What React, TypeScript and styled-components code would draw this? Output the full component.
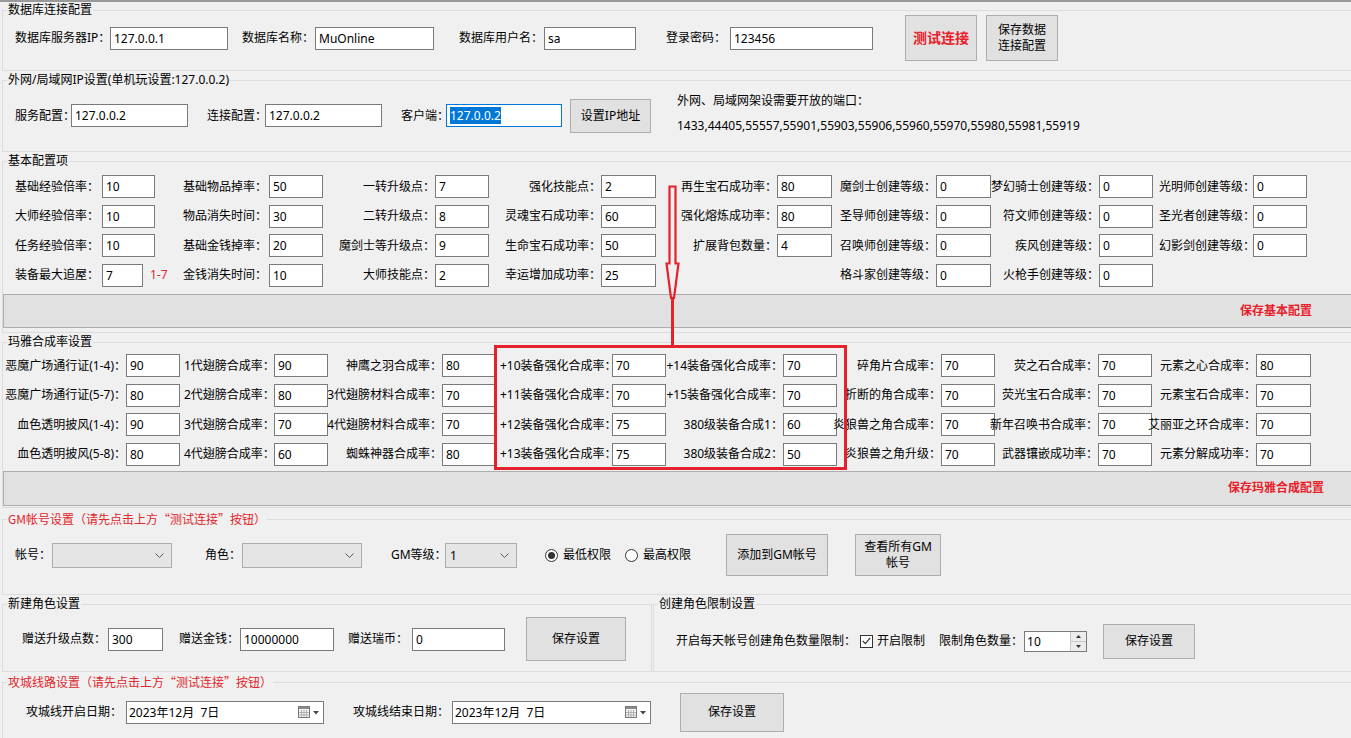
import React from 'react';
import styled, { createGlobalStyle } from 'styled-components';

const GlobalStyle = createGlobalStyle`
  html, body {
    margin: 0;
    padding: 0;
    background: #f0f0f0;
  }
  body {
    font-family: "Noto Sans", "Noto Sans CJK SC", sans-serif;
    font-size: 12px;
    color: #000;
  }
`;

const Page = styled.div`
  position: relative;
  width: 1351px;
  height: 738px;
  overflow: hidden;
  background: #f0f0f0;
`;

const TopRule = styled.div`
  height: 2px;
  background: #9a9a9a;
`;

const Group = styled.fieldset<{ $h: number; $mt?: number; $w?: number; $ml?: number }>`
  box-sizing: border-box;
  margin: ${p => p.$mt ?? 1}px 0 0 ${p => p.$ml ?? 2}px;
  padding: 0;
  width: ${p => p.$w ?? 1380}px;
  height: ${p => p.$h}px;
  border: 1px solid #dcdcdc;
  min-width: 0;
  flex: none;
`;

const Title = styled.legend<{ $red?: boolean }>`
  margin-left: 4px;
  padding: 0 1px;
  font-size: 12px;
  line-height: 16px;
  color: ${p => (p.$red ? '#e0272c' : '#000')};
  font-family: ${p => (p.$red ? '"Noto Sans CJK SC", sans-serif' : 'inherit')};
`;

const Row = styled.div<{ $h: number }>`
  display: flex;
  align-items: center;
  height: ${p => p.$h}px;
`;

const SplitRow = styled.div`
  display: flex;
  margin-top: 1px;
`;

const Field = styled.div<{ $ml?: number }>`
  display: flex;
  align-items: center;
  flex: none;
  margin-left: ${p => p.$ml ?? 0}px;
`;

const Label = styled.span<{ $w?: number; $right?: boolean }>`
  display: flex;
  justify-content: ${p => (p.$right ? 'flex-end' : 'flex-start')};
  width: ${p => (p.$w ? `${p.$w}px` : 'auto')};
  flex: none;
  white-space: nowrap;
  line-height: 16px;
`;

const TextBox = styled.div<{ $w: number; $focus?: boolean }>`
  box-sizing: border-box;
  width: ${p => p.$w}px;
  height: 23px;
  flex: none;
  border: 1px solid ${p => (p.$focus ? '#0078d7' : '#7a7a7a')};
  background: #fff;
  padding: 0 3px;
  line-height: 21px;
  white-space: nowrap;
  overflow: hidden;
`;

const Selected = styled.span`
  display: inline-block;
  background: #0078d7;
  color: #fff;
  line-height: 17px;
`;

const Note = styled.span`
  flex: none;
  margin-left: 7px;
  color: #e0272c;
  line-height: 16px;
  white-space: nowrap;
`;

const Button = styled.div<{ $w: number; $h: number; $ml: number; $red?: boolean }>`
  box-sizing: border-box;
  width: ${p => p.$w}px;
  height: ${p => p.$h}px;
  margin-left: ${p => p.$ml}px;
  flex: none;
  border: 1px solid #adadad;
  background: #e1e1e1;
  display: flex;
  align-items: center;
  justify-content: center;
  text-align: center;
  line-height: 16px;
  color: ${p => (p.$red ? '#e8202a' : '#000')};
  font-weight: ${p => (p.$red ? 700 : 400)};
  font-size: ${p => (p.$red ? 14 : 12)}px;
`;

const Info = styled.div<{ $ml: number }>`
  align-self: flex-start;
  margin-left: ${p => p.$ml}px;
  line-height: 25px;
  white-space: nowrap;
`;

const Columns = styled.div<{ $pt: number }>`
  display: flex;
  padding-top: ${p => p.$pt}px;
`;

const Column = styled.div<{ $ml: number; $w: number }>`
  display: grid;
  grid-template-rows: repeat(4, 23px);
  row-gap: 6.67px;
  width: ${p => p.$w}px;
  margin-left: ${p => p.$ml}px;
  flex: none;
`;

const SaveBar = styled.div<{ $h: number; $mt: number }>`
  box-sizing: border-box;
  height: ${p => p.$h}px;
  margin-top: ${p => p.$mt}px;
  border: 1px solid #adadad;
  background: #e1e1e1;
  display: flex;
  align-items: center;
  justify-content: flex-end;
  padding-right: 34px;
`;

const SaveText = styled.span`
  width: 140px;
  text-align: center;
  color: #e8202a;
  font-weight: 700;
  line-height: 16px;
`;

const Combo = styled.div<{ $w: number }>`
  box-sizing: border-box;
  width: ${p => p.$w}px;
  height: 25px;
  flex: none;
  border: 1px solid #adadad;
  background: #e5e5e5;
  display: flex;
  align-items: center;
  justify-content: space-between;
  padding: 0 7px 0 4px;
`;

const RadioItem = styled.div<{ $ml: number }>`
  display: flex;
  align-items: center;
  gap: 5px;
  margin-left: ${p => p.$ml}px;
  flex: none;
`;

const RadioDot = styled.span<{ $on?: boolean }>`
  box-sizing: border-box;
  width: 13px;
  height: 13px;
  border-radius: 50%;
  border: 1px solid #333;
  background: #fff;
  display: flex;
  align-items: center;
  justify-content: center;
  &::after {
    content: '';
    display: ${p => (p.$on ? 'block' : 'none')};
    width: 7px;
    height: 7px;
    border-radius: 50%;
    background: #333;
  }
`;

const CheckBox = styled.span`
  box-sizing: border-box;
  width: 13px;
  height: 13px;
  border: 1px solid #333;
  background: #fff;
  display: flex;
  align-items: center;
  justify-content: center;
  margin-left: 4px;
  margin-right: 4px;
`;

const Numeric = styled.div<{ $w: number }>`
  box-sizing: border-box;
  width: ${p => p.$w}px;
  height: 21px;
  flex: none;
  border: 1px solid #7a7a7a;
  background: #fff;
  display: flex;
  align-items: stretch;
  padding-left: 2px;
  line-height: 19px;
`;

const Spinner = styled.div`
  display: flex;
  flex-direction: column;
  width: 15px;
  margin-left: auto;
  border-left: 1px solid #c8c8c8;
`;

const SpinBtn = styled.div`
  flex: 1;
  background: #ececec;
  display: flex;
  align-items: center;
  justify-content: center;
  & + & {
    border-top: 1px solid #c8c8c8;
  }
`;

const DateBox = styled.div<{ $w: number }>`
  box-sizing: border-box;
  width: ${p => p.$w}px;
  height: 23px;
  flex: none;
  border: 1px solid #7a7a7a;
  background: #fff;
  display: flex;
  align-items: center;
  justify-content: space-between;
  padding: 0 3px 0 2px;
  white-space: pre;
`;

const Annotation = styled.svg`
  position: absolute;
  left: 0;
  top: 0;
  pointer-events: none;
`;

type Cell = { label: string; value: string; iw?: number; note?: string };
type ColSpec = { ml: number; lw: number; iw: number; right?: boolean; cells: Cell[] };

const basicCols: ColSpec[] = [
  {
    ml: 12, lw: 87, iw: 53,
    cells: [
      { label: '基础经验倍率：', value: '10' },
      { label: '大师经验倍率：', value: '10' },
      { label: '任务经验倍率：', value: '10' },
      { label: '装备最大追屋：', value: '7', iw: 41, note: '1-7' },
    ],
  },
  {
    ml: 28, lw: 86, iw: 54,
    cells: [
      { label: '基础物品掉率：', value: '50' },
      { label: '物品消失时间：', value: '30' },
      { label: '基础金钱掉率：', value: '20' },
      { label: '金钱消失时间：', value: '10' },
    ],
  },
  {
    ml: 7, lw: 105, iw: 54, right: true,
    cells: [
      { label: '一转升级点：', value: '7' },
      { label: '二转升级点：', value: '8' },
      { label: '魔剑士等升级点：', value: '9' },
      { label: '大师技能点：', value: '2' },
    ],
  },
  {
    ml: 6, lw: 106, iw: 55, right: true,
    cells: [
      { label: '强化技能点：', value: '2' },
      { label: '灵魂宝石成功率：', value: '60' },
      { label: '生命宝石成功率：', value: '50' },
      { label: '幸运增加成功率：', value: '25' },
    ],
  },
  {
    ml: 14, lw: 107, iw: 55, right: true,
    cells: [
      { label: '再生宝石成功率：', value: '80' },
      { label: '强化熔炼成功率：', value: '80' },
      { label: '扩展背包数量：', value: '4' },
    ],
  },
  {
    ml: 4, lw: 100, iw: 55, right: true,
    cells: [
      { label: '魔剑士创建等级：', value: '0' },
      { label: '圣导师创建等级：', value: '0' },
      { label: '召唤师创建等级：', value: '0' },
      { label: '格斗家创建等级：', value: '0' },
    ],
  },
  {
    ml: 0, lw: 108, iw: 54, right: true,
    cells: [
      { label: '梦幻骑士创建等级：', value: '0' },
      { label: '符文师创建等级：', value: '0' },
      { label: '疾风创建等级：', value: '0' },
      { label: '火枪手创建等级：', value: '0' },
    ],
  },
  {
    ml: 6, lw: 94, iw: 54,
    cells: [
      { label: '光明师创建等级：', value: '0' },
      { label: '圣光者创建等级：', value: '0' },
      { label: '幻影剑创建等级：', value: '0' },
    ],
  },
];

const mayaCols: ColSpec[] = [
  {
    ml: 0, lw: 123, iw: 54, right: true,
    cells: [
      { label: '恶魔广场通行证(1-4)：', value: '90' },
      { label: '恶魔广场通行证(5-7)：', value: '80' },
      { label: '血色透明披风(1-4)：', value: '90' },
      { label: '血色透明披风(5-8)：', value: '80' },
    ],
  },
  {
    ml: 4, lw: 90, iw: 54,
    cells: [
      { label: '1代翅膀合成率：', value: '90' },
      { label: '2代翅膀合成率：', value: '80' },
      { label: '3代翅膀合成率：', value: '70' },
      { label: '4代翅膀合成率：', value: '60' },
    ],
  },
  {
    ml: 2, lw: 112, iw: 54, right: true,
    cells: [
      { label: '神鹰之羽合成率：', value: '80' },
      { label: '3代翅膀材料合成率：', value: '70' },
      { label: '4代翅膀材料合成率：', value: '70' },
      { label: '蜘蛛神器合成率：', value: '80' },
    ],
  },
  {
    ml: 4, lw: 112, iw: 54,
    cells: [
      { label: '+10装备强化合成率：', value: '70' },
      { label: '+11装备强化合成率：', value: '70' },
      { label: '+12装备强化合成率：', value: '75' },
      { label: '+13装备强化合成率：', value: '75' },
    ],
  },
  {
    ml: 1, lw: 116, iw: 54, right: true,
    cells: [
      { label: '+14装备强化合成率：', value: '70' },
      { label: '+15装备强化合成率：', value: '70' },
      { label: '380级装备合成1：', value: '60' },
      { label: '380级装备合成2：', value: '50' },
    ],
  },
  {
    ml: 1, lw: 103, iw: 54, right: true,
    cells: [
      { label: '碎角片合成率：', value: '70' },
      { label: '折断的角合成率：', value: '70' },
      { label: '炎狼兽之角合成率：', value: '70' },
      { label: '炎狼兽之角升级：', value: '70' },
    ],
  },
  {
    ml: 1, lw: 102, iw: 54, right: true,
    cells: [
      { label: '荧之石合成率：', value: '70' },
      { label: '荧光宝石合成率：', value: '70' },
      { label: '新年召唤书合成率：', value: '70' },
      { label: '武器镶嵌成功率：', value: '70' },
    ],
  },
  {
    ml: 1, lw: 103, iw: 55, right: true,
    cells: [
      { label: '元素之心合成率：', value: '80' },
      { label: '元素宝石合成率：', value: '70' },
      { label: '艾丽亚之环合成率：', value: '70' },
      { label: '元素分解成功率：', value: '70' },
    ],
  },
];

const GridColumns: React.FC<{ cols: ColSpec[]; pt: number }> = ({ cols, pt }) => (
  <Columns $pt={pt}>
    {cols.map((c, i) => (
      <Column key={i} $ml={c.ml} $w={c.lw + c.iw}>
        {c.cells.map((cell, j) => (
          <Field key={j}>
            <Label $w={c.lw} $right={c.right}>{cell.label}</Label>
            <TextBox $w={cell.iw ?? c.iw}>{cell.value}</TextBox>
            {cell.note && <Note>{cell.note}</Note>}
          </Field>
        ))}
      </Column>
    ))}
  </Columns>
);

const Chevron = () => (
  <svg width="9" height="5" viewBox="0 0 9 5">
    <path d="M0.5 0.5 L4.5 4.5 L8.5 0.5" fill="none" stroke="#5a5a5a" strokeWidth="1" />
  </svg>
);

const CalendarIcon = () => (
  <svg width="22" height="14" viewBox="0 0 22 14">
    <rect x="0.5" y="1.5" width="11" height="11" fill="#f4f4f4" stroke="#7a7a7a" />
    <rect x="1" y="2" width="10" height="2" fill="#8a8a8a" />
    <path d="M3.5 5v7M6 5v7M8.5 5v7M1 7.5h10M1 10h10" stroke="#b0b0b0" strokeWidth="1" />
    <path d="M15 6h6l-3 3.5z" fill="#4a4a4a" />
  </svg>
);

const App: React.FC = () => {
  return (
    <Page>
      <GlobalStyle />
      <TopRule />

      <Group $h={69} $mt={0}>
        <Title>数据库连接配置</Title>
        <Row $h={40}>
          <Field $ml={12}>
            <Label $w={95}>数据库服务器IP：</Label>
            <TextBox $w={118}>127.0.0.1</TextBox>
          </Field>
          <Field $ml={14}>
            <Label $w={73}>数据库名称：</Label>
            <TextBox $w={119}>MuOnline</TextBox>
          </Field>
          <Field $ml={25}>
            <Label $w={85}>数据库用户名：</Label>
            <TextBox $w={92}>sa</TextBox>
          </Field>
          <Field $ml={30}>
            <Label $w={64}>登录密码：</Label>
            <TextBox $w={143}>123456</TextBox>
          </Field>
          <Button $w={72} $h={46} $ml={32} $red>测试连接</Button>
          <Button $w={72} $h={46} $ml={9}>保存数据<br />连接配置</Button>
        </Row>
      </Group>

      <Group $h={80}>
        <Title>外网/局域网IP设置(单机玩设置:127.0.0.2)</Title>
        <Row $h={55}>
          <Field $ml={12}>
            <Label $w={56}>服务配置：</Label>
            <TextBox $w={117}>127.0.0.2</TextBox>
          </Field>
          <Field $ml={19}>
            <Label $w={58}>连接配置：</Label>
            <TextBox $w={117}>127.0.0.2</TextBox>
          </Field>
          <Field $ml={19}>
            <Label $w={45}>客户端：</Label>
            <TextBox $w={116} $focus><Selected>127.0.0.2</Selected></TextBox>
          </Field>
          <Button $w={81} $h={34} $ml={8}>设置IP地址</Button>
          <Info $ml={26}>
            外网、局域网架设需要开放的端口：
            <br />
            1433,44405,55557,55901,55903,55906,55960,55970,55980,55981,55919
          </Info>
        </Row>
      </Group>

      <Group $h={180}>
        <Title>基本配置项</Title>
        <GridColumns cols={basicCols} pt={6} />
        <SaveBar $h={34} $mt={7}>
          <SaveText>保存基本配置</SaveText>
        </SaveBar>
      </Group>

      <Group $h={174}>
        <Title>玛雅合成率设置</Title>
        <GridColumns cols={mayaCols} pt={4} />
        <SaveBar $h={35} $mt={5}>
          <SaveText>保存玛雅合成配置</SaveText>
        </SaveBar>
      </Group>

      <Group $h={84} $mt={3}>
        <Title $red>GM帐号设置（请先点击上方“测试连接”按钮）</Title>
        <Row $h={56}>
          <Field $ml={12}>
            <Label $w={37}>帐号：</Label>
            <Combo $w={120}><span /><Chevron /></Combo>
          </Field>
          <Field $ml={33}>
            <Label $w={37}>角色：</Label>
            <Combo $w={120}><span /><Chevron /></Combo>
          </Field>
          <Field $ml={29}>
            <Label $w={54}>GM等级：</Label>
            <Combo $w={72}><span>1</span><Chevron /></Combo>
          </Field>
          <RadioItem $ml={28}>
            <RadioDot $on />
            <Label>最低权限</Label>
          </RadioItem>
          <RadioItem $ml={14}>
            <RadioDot />
            <Label>最高权限</Label>
          </RadioItem>
          <Button $w={102} $h={42} $ml={35}>添加到GM帐号</Button>
          <Button $w={86} $h={42} $ml={27}>查看所有GM<br />帐号</Button>
        </Row>
      </Group>

      <SplitRow>
        <Group $h={76} $mt={0} $w={650}>
          <Title>新建角色设置</Title>
          <Row $h={54}>
            <Field $ml={19}>
              <Label $w={86}>赠送升级点数：</Label>
              <TextBox $w={55}>300</TextBox>
            </Field>
            <Field $ml={16}>
              <Label $w={61}>赠送金钱：</Label>
              <TextBox $w={94}>10000000</TextBox>
            </Field>
            <Field $ml={14}>
              <Label $w={64}>赠送瑞币：</Label>
              <TextBox $w={93}>0</TextBox>
            </Field>
            <Button $w={100} $h={44} $ml={21}>保存设置</Button>
          </Row>
        </Group>
        <Group $h={76} $mt={0} $w={720} $ml={1}>
          <Title>创建角色限制设置</Title>
          <Row $h={58}>
            <Field $ml={22}>
              <Label>开启每天帐号创建角色数量限制：</Label>
              <CheckBox>
                <svg width="9" height="8" viewBox="0 0 9 8">
                  <path d="M0.8 4 L3.4 6.6 L8.2 0.8" fill="none" stroke="#333" strokeWidth="1.2" />
                </svg>
              </CheckBox>
              <Label>开启限制</Label>
            </Field>
            <Field $ml={14}>
              <Label $w={85}>限制角色数量：</Label>
              <Numeric $w={63}>
                <span>10</span>
                <Spinner>
                  <SpinBtn>
                    <svg width="5" height="3" viewBox="0 0 5 3"><path d="M0 3h5L2.5 0z" fill="#333" /></svg>
                  </SpinBtn>
                  <SpinBtn>
                    <svg width="5" height="3" viewBox="0 0 5 3"><path d="M0 0h5L2.5 3z" fill="#333" /></svg>
                  </SpinBtn>
                </Spinner>
              </Numeric>
            </Field>
            <Button $w={92} $h={35} $ml={16}>保存设置</Button>
          </Row>
        </Group>
      </SplitRow>

      <Group $h={80} $mt={2}>
        <Title $red>攻城线路设置（请先点击上方“测试连接”按钮）</Title>
        <Row $h={44}>
          <Field $ml={23}>
            <Label $w={100}>攻城线开启日期：</Label>
            <DateBox $w={198}><span>2023年12月  7日</span><CalendarIcon /></DateBox>
          </Field>
          <Field $ml={29}>
            <Label $w={99}>攻城线结束日期：</Label>
            <DateBox $w={199}><span>2023年12月  7日</span><CalendarIcon /></DateBox>
          </Field>
          <Button $w={104} $h={39} $ml={29}>保存设置</Button>
        </Row>
      </Group>

      <Annotation width="1351" height="738" viewBox="0 0 1351 738">
        <rect x="495.5" y="346.5" width="350" height="122" fill="none" stroke="#e3222b" strokeWidth="3" />
        <path
          d="M669.5 186.5 H675.5 V263.5 H678.5 L674 298 H671 L666.5 263.5 H669.5 Z"
          fill="none"
          stroke="#e3222b"
          strokeWidth="2.2"
        />
        <path d="M672.5 298 V346" stroke="#e3222b" strokeWidth="3" />
      </Annotation>
    </Page>
  );
};

export default App;
